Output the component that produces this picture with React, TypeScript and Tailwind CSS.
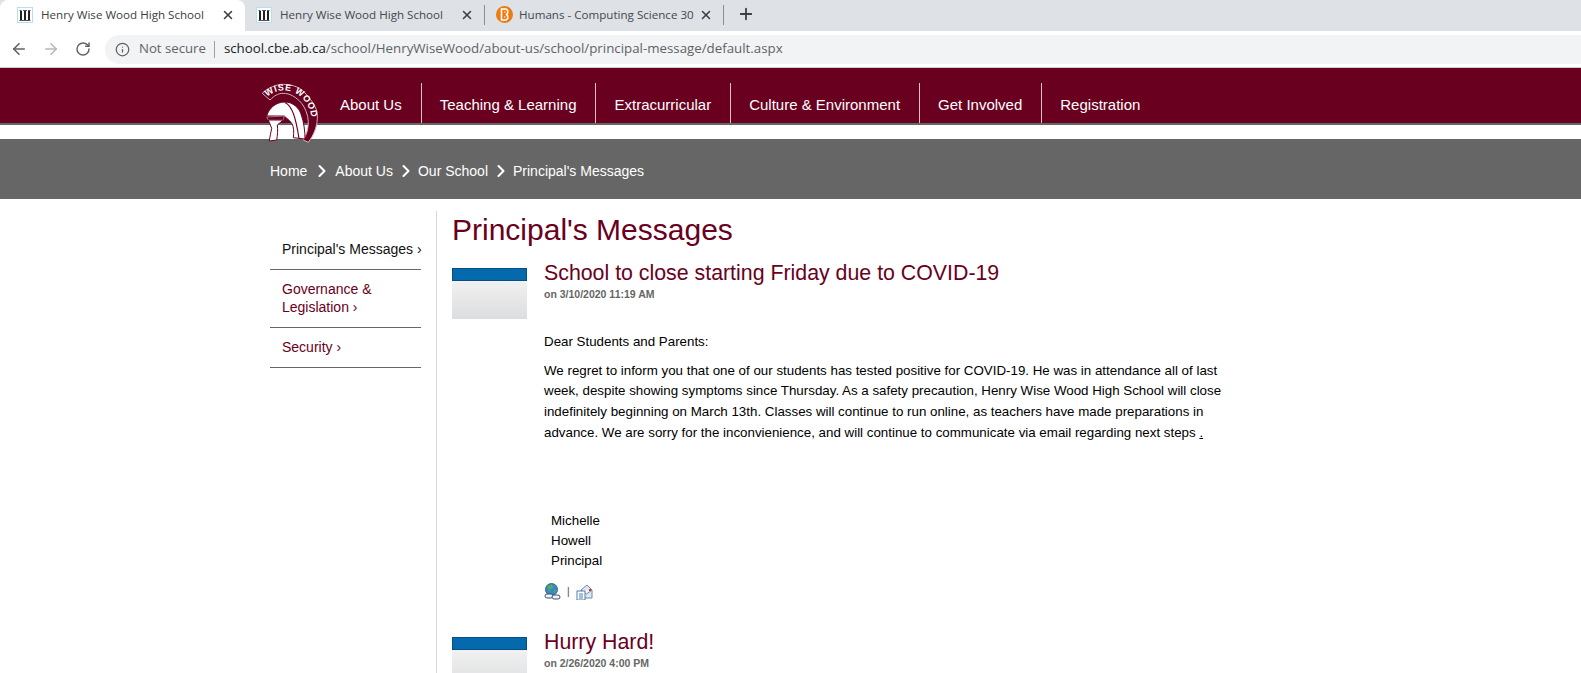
import React from "react";
import { ArrowLeft, ArrowRight, ChevronRight, Info, Plus, RotateCw, X } from "lucide-react";

const MAROON = "#690020";

const TabIcon = () => (
    <svg width="16" height="16" viewBox="0 0 16 16" className="shrink-0">
        <rect x="0.5" y="0.5" width="15" height="15" fill="#fff" stroke="#b5e0ee" />
        <path d="M4 4v9M8 4v9M12 4v9" stroke="#222" strokeWidth="2" />
        <path d="M2.500 3.500h2M6 3.500h4M11 3.500h2.500M2.500 13.500h11" stroke="#555" strokeWidth="1" />
    </svg>
);

const BrightspaceIcon = () => (
    <svg width="17" height="17" viewBox="0 0 17 17" className="shrink-0">
        <circle cx="8.5" cy="8.5" r="8.5" fill="#ee7a12" />
        <path d="M5.500 3h4.500l1.700 1.500v2.500l-1.200 1.500 1.200 1.500v2.500L10 14H5.500z" fill="none" stroke="#fff" strokeWidth="1.600" />
        <path d="M8 6h1.500M8 11h1.500" stroke="#fff" strokeWidth="1.200" />
    </svg>
);

const Tab = ({ title, icon, active, width }: { title: string; icon: React.ReactNode; active?: boolean; width: string }) => (
    <div className={`flex items-center h-full pr-[10px] pb-[2px] ${width} ${active ? "bg-white rounded-t-lg" : ""}`}>
        {icon}
        <span className={`flex-1 text-[11.6px] whitespace-nowrap overflow-hidden ${active ? "text-[#3c4043]" : "text-[#45484c]"}`}>{title}</span>
        <X size={14} strokeWidth={2.6} className="shrink-0 text-[#3c4043]" />
    </div>
);

const Logo = () => (
    <svg width="60" height="62" viewBox="0 0 60 62" className="absolute left-[-10px] top-[14px]">
        <path d="M2.300 11.300 C 8 6, 16 2.300, 23.300 2.300 C 33 2.300, 42 6, 46.700 13 C 52 19, 57.300 26, 57.300 33 C 58 43, 54 53, 48.300 60.300 L 43.300 58 C 47 52, 48.300 46, 48.300 39.700 C 48 32, 45 26, 41.700 21.300 C 36 15, 30 11.300, 23 11.300 C 18 11.300, 14 14, 10 18 Z" fill={MAROON} stroke="#cfb2ba" strokeWidth="1" />
        <path id="logoArc" d="M6.500 15.500 C 11 11, 17 8.500, 23 8.500 C 32 8.500, 39 12, 44 18 C 49 24, 51 30, 51.500 37 C 51.800 44, 49.500 52, 46 58" fill="none" />
        <text fontFamily="'Liberation Sans', sans-serif" fontWeight="700" fontSize="9" fill="#fff" letterSpacing="0.700">
            <textPath href="#logoArc" startOffset="1">WISE WOOD</textPath>
        </text>
        <path d="M6.700 34 C 9 26, 16 20, 25 20 C 33 20, 39 26, 41 32 C 44 40, 45 50, 45 57 L 33.300 55.700 C 34 50, 34 45, 31.700 41.300 C 29.500 38, 26 36, 24.300 34 Z" fill="#fff" stroke={MAROON} strokeWidth="1" />
        <path d="M6.700 35 L 24.300 34 L 23.300 38 L 8.300 38 Z" fill={MAROON} stroke="#e6d6da" strokeWidth="0.500" />
        <path d="M8.300 38 L 23.300 38 L 17.300 43 C 18 48, 17.500 53, 16.700 58 L 9.300 59 C 10 54, 11 50, 11.700 46.300 Z" fill="#fff" stroke={MAROON} strokeWidth="1" />
        <path d="M25 20.500 C 32 24, 35.500 34, 39 56.500" fill="none" stroke={MAROON} strokeWidth="1.200" />
    </svg>
);

const GlobeLink = () => (
    <svg width="17" height="17" viewBox="0 0 17 17">
        <circle cx="7.500" cy="6.500" r="6" fill="#3d86c6" stroke="#2f6c7d" />
        <path d="M3.500 3l4.500-1.500 1.500 3-3 1.500-1 3.500zM10 7l2.500 0-2 3.500z" fill="#4fae5f" />
        <rect x="1" y="11" width="8" height="4" rx="2" fill="#eef2f7" stroke="#3f5470" />
        <rect x="8" y="12" width="8" height="4" rx="2" fill="#eef2f7" stroke="#3f5470" />
    </svg>
);

const MailDoc = () => (
    <svg width="17" height="16" viewBox="0 0 17 16">
        <path d="M5 6L11 1l5 5v8H5z" fill="#dfe8f2" stroke="#6f8aa8" />
        <path d="M5 6l5.500 4L16 6" fill="#f6f8fb" stroke="#6f8aa8" />
        <rect x="13" y="5" width="2" height="2" fill="#d33" />
        <rect x="1" y="7" width="8" height="9" fill="#fff" stroke="#4c7fb5" />
        <path d="M3 10h4M3 12h4M3 14h4" stroke="#4c7fb5" />
    </svg>
);

const Thumb = () => (
    <div className="w-[75px] shrink-0 mt-[8px]">
        <div className="h-[13px] bg-[#0569ae] border border-[#045085]" />
        <div className="h-[38px] bg-gradient-to-b from-[#f1f1f1] to-[#dcdddf]" />
    </div>
);

const navItems = ["About Us", "Teaching & Learning", "Extracurricular", "Culture & Environment", "Get Involved", "Registration"];
const crumbs = [
    { label: "Home", chevron: "ml-[5px] mr-[3px]" },
    { label: "About Us", chevron: "ml-[3px] mr-[2px]" },
    { label: "Our School", chevron: "ml-[3px] mr-[2px]" },
];

const App: React.FC = () => {
    return (
        <div className="w-[1581px] h-[673px] overflow-hidden bg-white font-['Liberation_Sans',sans-serif]">
            {/* Browser tabs */}
            <div className="h-[31px] bg-[#dee1e6] flex items-end font-['Open_Sans',sans-serif]">
                <Tab active title="Henry Wise Wood High School" icon={<span className="ml-[17px] mr-[8px]"><TabIcon /></span>} width="w-[245px]" />
                <Tab title="Henry Wise Wood High School" icon={<span className="ml-[11px] mr-[8px]"><TabIcon /></span>} width="w-[239px]" />
                <div className="w-px h-[20px] bg-[#8b8e92] mb-[6px]" />
                <Tab title="Humans - Computing Science 30" icon={<span className="ml-[11px] mr-[6px]"><BrightspaceIcon /></span>} width="w-[238px]" />
                <div className="w-px h-[20px] bg-[#8b8e92] mb-[6px]" />
                <Plus size={18} strokeWidth={2.4} className="ml-[13px] mb-[8px] text-[#3c4043]" />
            </div>
            {/* Toolbar */}
            <div className="h-[37px] bg-white flex items-center font-['Open_Sans',sans-serif] border-b border-[#c9cbce]">
                <ArrowLeft size={18} strokeWidth={2.2} className="ml-[10px] text-[#5f6368]" />
                <ArrowRight size={18} strokeWidth={2} className="ml-[14px] text-[#b4b6b9]" />
                <RotateCw size={16} strokeWidth={2.2} className="ml-[15px] text-[#5f6368]" />
                <div className="ml-[14px] flex-1 h-[29px] bg-[#f1f3f4] rounded-l-full flex items-center pl-[10px] text-[13px]">
                    <Info size={15} className="text-[#5f6368]" />
                    <span className="ml-[9px] text-[#5f6368] text-[13.2px]">Not secure</span>
                    <span className="ml-[8px] mr-[9px] w-px h-[17px] bg-[#9aa0a6]" />
                    <span className="text-[#202124] text-[13.3px]">school.cbe.ab.ca</span>
                    <span className="text-[#5f6368] text-[13.3px]">/school/HenryWiseWood/about-us/school/principal-message/default.aspx</span>
                </div>
            </div>
            {/* Site header */}
            <div className="h-[55px] bg-[#690020]">
                <div className="relative ml-[270px] h-full flex items-end pl-[52px]">
                    <Logo />
                    {navItems.map((item, i) => (
                        <div key={item} className={`h-[40px] flex items-center pl-[18px] pr-[19px] pt-[4px] text-[15px] text-white whitespace-nowrap ${i > 0 ? "border-l border-[#d9c3c9]" : ""}`}>
                            {item}
                        </div>
                    ))}
                </div>
            </div>
            <div className="h-[2px] bg-[#666]" />
            <div className="h-[14px] bg-white" />
            {/* Breadcrumb */}
            <div className="h-[60px] bg-[#666666] pl-[270px] pt-[4px] flex items-center text-[14px] text-white">
                {crumbs.map((c) => (
                    <React.Fragment key={c.label}>
                        <span>{c.label}</span>
                        <ChevronRight size={20} strokeWidth={2.5} className={c.chevron} />
                    </React.Fragment>
                ))}
                <span>Principal's Messages</span>
            </div>
            {/* Body */}
            <div className="ml-[270px] mt-[12px] flex">
                <div className="w-[151px] shrink-0 pt-[18px] text-[14px] leading-[18px] text-[#690020]">
                    <div className="h-[41px] pl-[12px] pt-[11px] border-b border-[#666] text-[#111] whitespace-nowrap">Principal's Messages ›</div>
                    <div className="pl-[12px] pt-[10px] pb-[11px] border-b border-[#666]">Governance &<br />Legislation ›</div>
                    <div className="h-[40px] pl-[12px] pt-[10px] border-b border-[#666]">Security ›</div>
                </div>
                <div className="ml-[15px] w-[800px] border-l border-[#d8d8d8] pl-[15px] h-[470px]">
                    <h1 className="text-[30px] leading-[38px] text-[#690020]">Principal's Messages</h1>
                    <div className="flex gap-[17px] mt-[11px]">
                        <Thumb />
                        <div className="w-[680px]">
                            <h2 className="text-[21.33px] leading-[26px] text-[#690020]">School to close starting Friday due to COVID-19</h2>
                            <div className="mt-[1px] text-[10.5px] leading-[14px] font-bold text-[#666]">on 3/10/2020 11:19 AM</div>
                            <div className="mt-[31px] text-[13.33px] leading-[20.67px] text-black">
                                <p>Dear Students and Parents:</p>
                                <p className="mt-[8px]">
                                    We regret to inform you that one of our students has tested positive for COVID-19. He was in attendance all of last week, despite showing symptoms since Thursday. As a safety precaution, Henry Wise Wood High School will close indefinitely beginning on March 13th. Classes will continue to run online, as teachers have made preparations in advance. We are sorry for the inconvienience, and will continue to communicate via email regarding next steps <u>.</u>
                                </p>
                                <div className="mt-[68px] pl-[7px] leading-[20px]">
                                    <div>Michelle</div>
                                    <div>Howell</div>
                                    <div>Principal</div>
                                </div>
                            </div>
                            <div className="mt-[12px] flex items-center gap-[6px] text-[10px] text-[#444]">
                                <GlobeLink />
                                <span>|</span>
                                <MailDoc />
                            </div>
                        </div>
                    </div>
                    <div className="flex gap-[17px] mt-[29px]">
                        <Thumb />
                        <div>
                            <h2 className="text-[21.33px] leading-[26px] text-[#690020]">Hurry Hard!</h2>
                            <div className="mt-[1px] text-[10.5px] leading-[14px] font-bold text-[#666]">on 2/26/2020 4:00 PM</div>
                        </div>
                    </div>
                </div>
            </div>
        </div>
    );
};

export default App;
